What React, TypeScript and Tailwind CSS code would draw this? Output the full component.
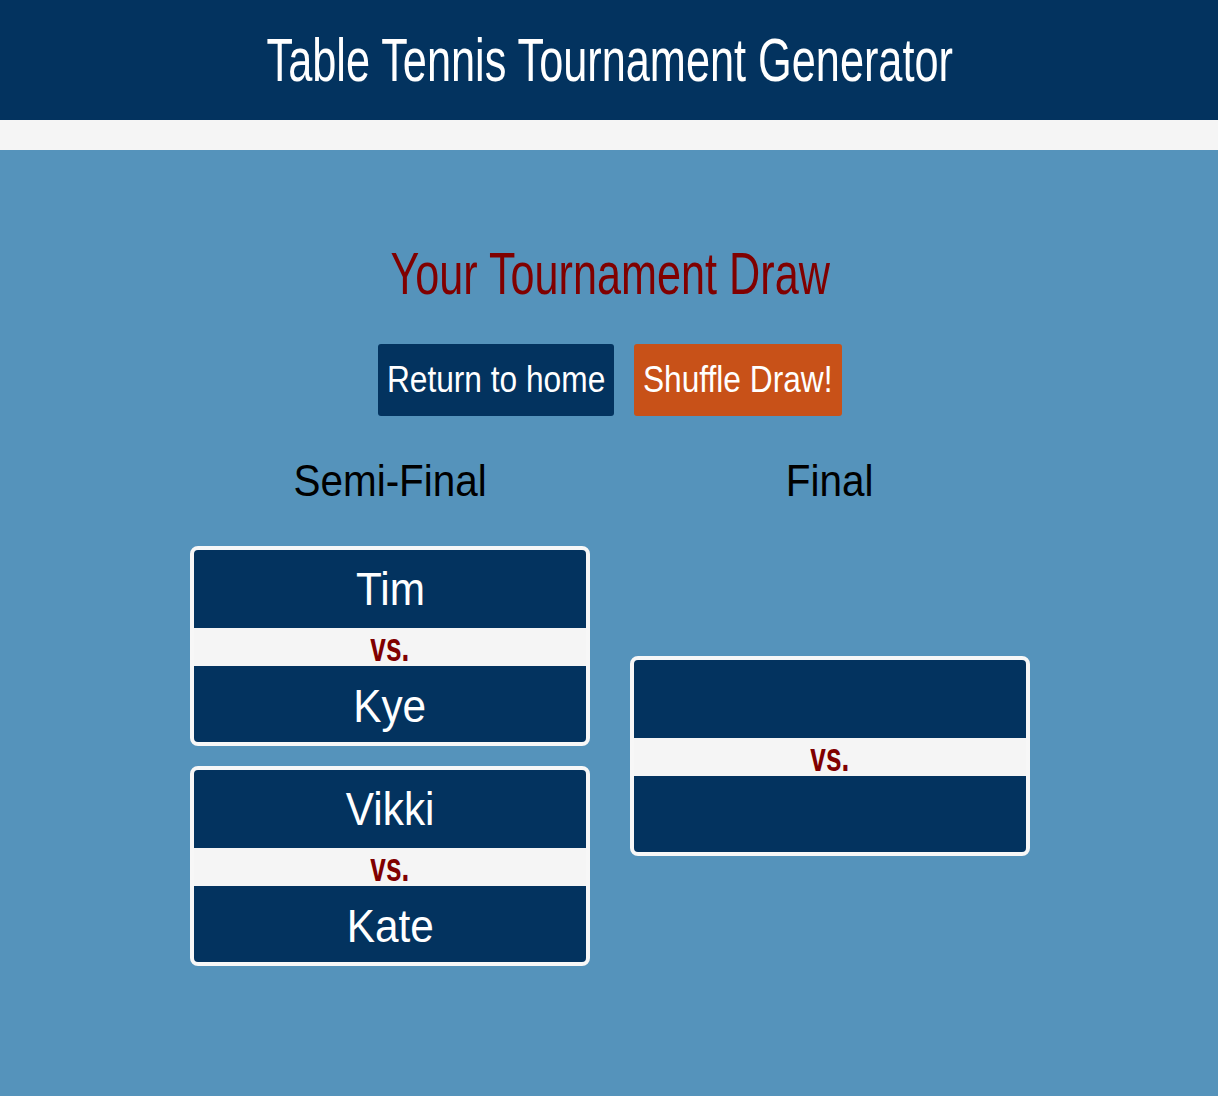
const sans = "font-['Liberation_Sans','Arial',sans-serif]";

// the reference uses narrow faces; Liberation Sans squeezed sideways stands in for them
function Name({ children }: { children?: string }) {
  return <span className="inline-block scale-x-[0.92]">{children}</span>;
}

function Match({ a, b }: { a?: string; b?: string }) {
  return (
    <div className="w-[400px] rounded-lg border-4 border-[#f7f7f7] overflow-hidden bg-[#03335f]">
      <div className="h-[78px] flex items-center justify-center text-[46px] text-white leading-none">
        <Name>{a}</Name>
      </div>
      <div className="h-[38px] bg-[#f5f5f5] flex items-center justify-center text-[40px] font-bold text-[#800000] leading-none">
        <span className="inline-block scale-x-[0.7]">vs.</span>
      </div>
      <div className="h-[76px] flex items-center justify-center text-[46px] text-white leading-none pt-[3px]">
        <Name>{b}</Name>
      </div>
    </div>
  );
}

export default function App() {
  return (
    <div className={`min-h-[1096px] bg-[#5593bb] ${sans}`}>
      <header className="h-[120px] bg-[#03335f] flex items-center justify-center pl-[2px]">
        <h1 className="text-[62px] text-white leading-none whitespace-nowrap">
          <span className="inline-block scale-x-[0.698]">Table Tennis Tournament Generator</span>
        </h1>
      </header>
      <div className="h-[30px] bg-[#f5f5f5]" />

      <main className="flex flex-col items-center pt-[94px] pl-[2px]">
        <h2 className="text-[60px] text-[#800000] leading-none whitespace-nowrap">
          <span className="inline-block scale-x-[0.72]">Your Tournament Draw</span>
        </h2>

        <div className="flex gap-5 mt-[40px]">
          <button className="w-[236px] h-[72px] rounded-[3px] bg-[#03335f] text-white text-[36px] whitespace-nowrap flex items-center justify-center">
            <span className="inline-block scale-x-[0.88]">Return to home</span>
          </button>
          <button className="w-[208px] h-[72px] rounded-[3px] bg-[#c85118] text-white text-[36px] whitespace-nowrap flex items-center justify-center">
            <span className="inline-block scale-x-[0.88]">Shuffle Draw!</span>
          </button>
        </div>

        <div className="flex gap-10 mt-[43px]">
          <div className="flex flex-col items-center">
            <h3 className="text-[44px] text-black leading-none h-[44px]">
              <Name>Semi-Final</Name>
            </h3>
            <div className="flex flex-col gap-5 mt-[43px]">
              <Match a="Tim" b="Kye" />
              <Match a="Vikki" b="Kate" />
            </div>
          </div>
          <div className="flex flex-col items-center">
            <h3 className="text-[44px] text-black leading-none h-[44px]">
              <Name>Final</Name>
            </h3>
            <div className="flex-1 flex items-center mt-[43px]">
              <Match />
            </div>
          </div>
        </div>
      </main>
    </div>
  );
}
